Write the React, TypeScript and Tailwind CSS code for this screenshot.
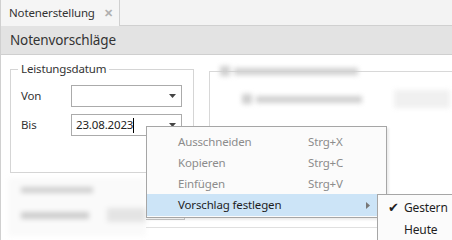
const Arrow = () => (
  <svg width="7" height="4" viewBox="0 0 7 4" className="mr-[5px]">
    <path d="M0 0 H7 L3.5 4 Z" fill="#444" />
  </svg>
);

interface MenuItemProps {
  label: string;
  shortcut?: string;
  disabled?: boolean;
  active?: boolean;
  submenu?: boolean;
}

const MenuItem = ({ label, shortcut, disabled, active, submenu }: MenuItemProps) => (
  <div
    className={`flex items-center pl-[31px] pr-[16px] ${active ? 'bg-[#cce4f7] h-[22px] text-[#1e1e1e]' : 'h-[21px]'} ${disabled ? 'text-[#8c8c8c]' : ''}`}
  >
    <span className="w-[130px]">{label}</span>
    <span className="flex-1">{shortcut}</span>
    {submenu && (
      <svg width="4" height="7" viewBox="0 0 4 7">
        <path d="M0 0 L4 3.5 L0 7 Z" fill="#777" />
      </svg>
    )}
  </div>
);

export default function App() {
  return (
    <div className="w-[452px] h-[240px] overflow-hidden bg-white relative font-['Noto_Sans',sans-serif] text-[11.5px] tracking-[-0.15px] text-[#333] border-l border-[#d0d0d0]">
      {/* Tabs */}
      <div className="h-[26px] bg-[#f3f3f3] flex">
        <div className="w-[119px] h-[26px] bg-[#f5f5f5] border-r border-[#d0d0d0] flex items-center pl-[8px] gap-[9px]">
          <span>Notenerstellung</span>
          <span className="text-[#b0b0b0] font-bold text-[11px]">✕</span>
        </div>
        <div className="flex-1 border-b border-[#d0d0d0]" />
      </div>

      {/* Header */}
      <div className="h-[29px] bg-[#e3e3e3] border-b border-[#cfcfcf] flex items-center pl-[9px] text-[13.5px] text-[#333]">
        Notenvorschläge
      </div>

      {/* Content */}
      <div className="flex pt-[6px] pl-[9px]">
        <fieldset className="w-[184px] h-[112px] border border-[#d5d5d5] px-0 pb-0">
          <legend className="ml-[7px] px-[3px] leading-[16px]">Leistungsdatum</legend>
          <div className="flex flex-col gap-[7px] pl-[10px] mt-[8px]">
            <div className="flex items-center">
              <span className="w-[50px]">Von</span>
              <div className="w-[111px] h-[22px] border border-[#ababab] flex items-center justify-end">
                <Arrow />
              </div>
            </div>
            <div className="flex items-center">
              <span className="w-[50px]">Bis</span>
              <div className="w-[111px] h-[22px] border border-[#ababab] flex items-center pl-[4px]">
                <span className="text-[#222]">23.08.2023</span>
                <span className="w-px h-[15px] bg-black" />
                <span className="flex-1" />
                <Arrow />
              </div>
            </div>
          </div>
        </fieldset>

        {/* blurred right group */}
        <div className="ml-[15px] mt-[10px] flex-1 h-[60px] border-l border-t border-[#d8d8d8]">
          <div className="blur-[2.5px] flex flex-col gap-[14px] pl-[10px] -mt-[6px]">
            <div className="flex items-center gap-[4px]">
              <span className="w-[10px] h-[10px] bg-[#cfcfcf]" />
              <span className="w-[124px] h-[7px] bg-[#d0d0d0]" />
            </div>
            <div className="flex items-center gap-[4px] pl-[22px]">
              <span className="w-[10px] h-[10px] bg-[#cfcfcf]" />
              <span className="w-[106px] h-[7px] bg-[#d0d0d0]" />
              <span className="ml-[28px] w-[56px] h-[18px] bg-[#f0f0f0]" />
            </div>
          </div>
        </div>
      </div>

      {/* blurred bottom group */}
      <div className="ml-[7px] mt-[5px] w-[138px] h-[58px] bg-[#fafafa] blur-[2.5px] flex flex-col gap-[15px] pl-[13px] pt-[9px]">
        <span className="w-[72px] h-[6px] bg-[#d0d0d0]" />
        <div className="flex items-center gap-[18px]">
          <span className="w-[70px] h-[7px] bg-[#cdcdcd]" />
          <span className="w-[40px] h-[14px] bg-[#e4e4e4]" />
        </div>
      </div>

      {/* Context menu */}
      <div className="absolute left-[145px] top-[126px] w-[241px] h-[92px] bg-[#fbfbfb] border border-[#a6a6a6] pt-[4px] shadow-[2px_2px_2px_rgba(0,0,0,0.08)]">
        <MenuItem label="Ausschneiden" shortcut="Strg+X" disabled />
        <MenuItem label="Kopieren" shortcut="Strg+C" disabled />
        <MenuItem label="Einfügen" shortcut="Strg+V" disabled />
        <MenuItem label="Vorschlag festlegen" active submenu />
      </div>
      <div className="absolute left-[145px] top-[218px] w-[39px] h-[2px] border-b border-r border-[#bdbdbd]" />
      <div className="absolute left-[145px] top-[227px] w-[232px] h-px bg-[#e0e0e0]" />

      {/* Submenu */}
      <div className="absolute left-[376px] top-[194px] w-[76px] h-[50px] bg-[#fbfbfb] border border-[#a6a6a6] pt-[2px] text-[#1e1e1e] text-[12px]">
        <div className="h-[22px] flex items-center">
          <span className="w-[26px] flex justify-center pl-[4px] text-[13px]">✔</span>
          <span>Gestern</span>
        </div>
        <div className="h-[22px] flex items-center pl-[26px]">Heute</div>
      </div>
    </div>
  );
}
